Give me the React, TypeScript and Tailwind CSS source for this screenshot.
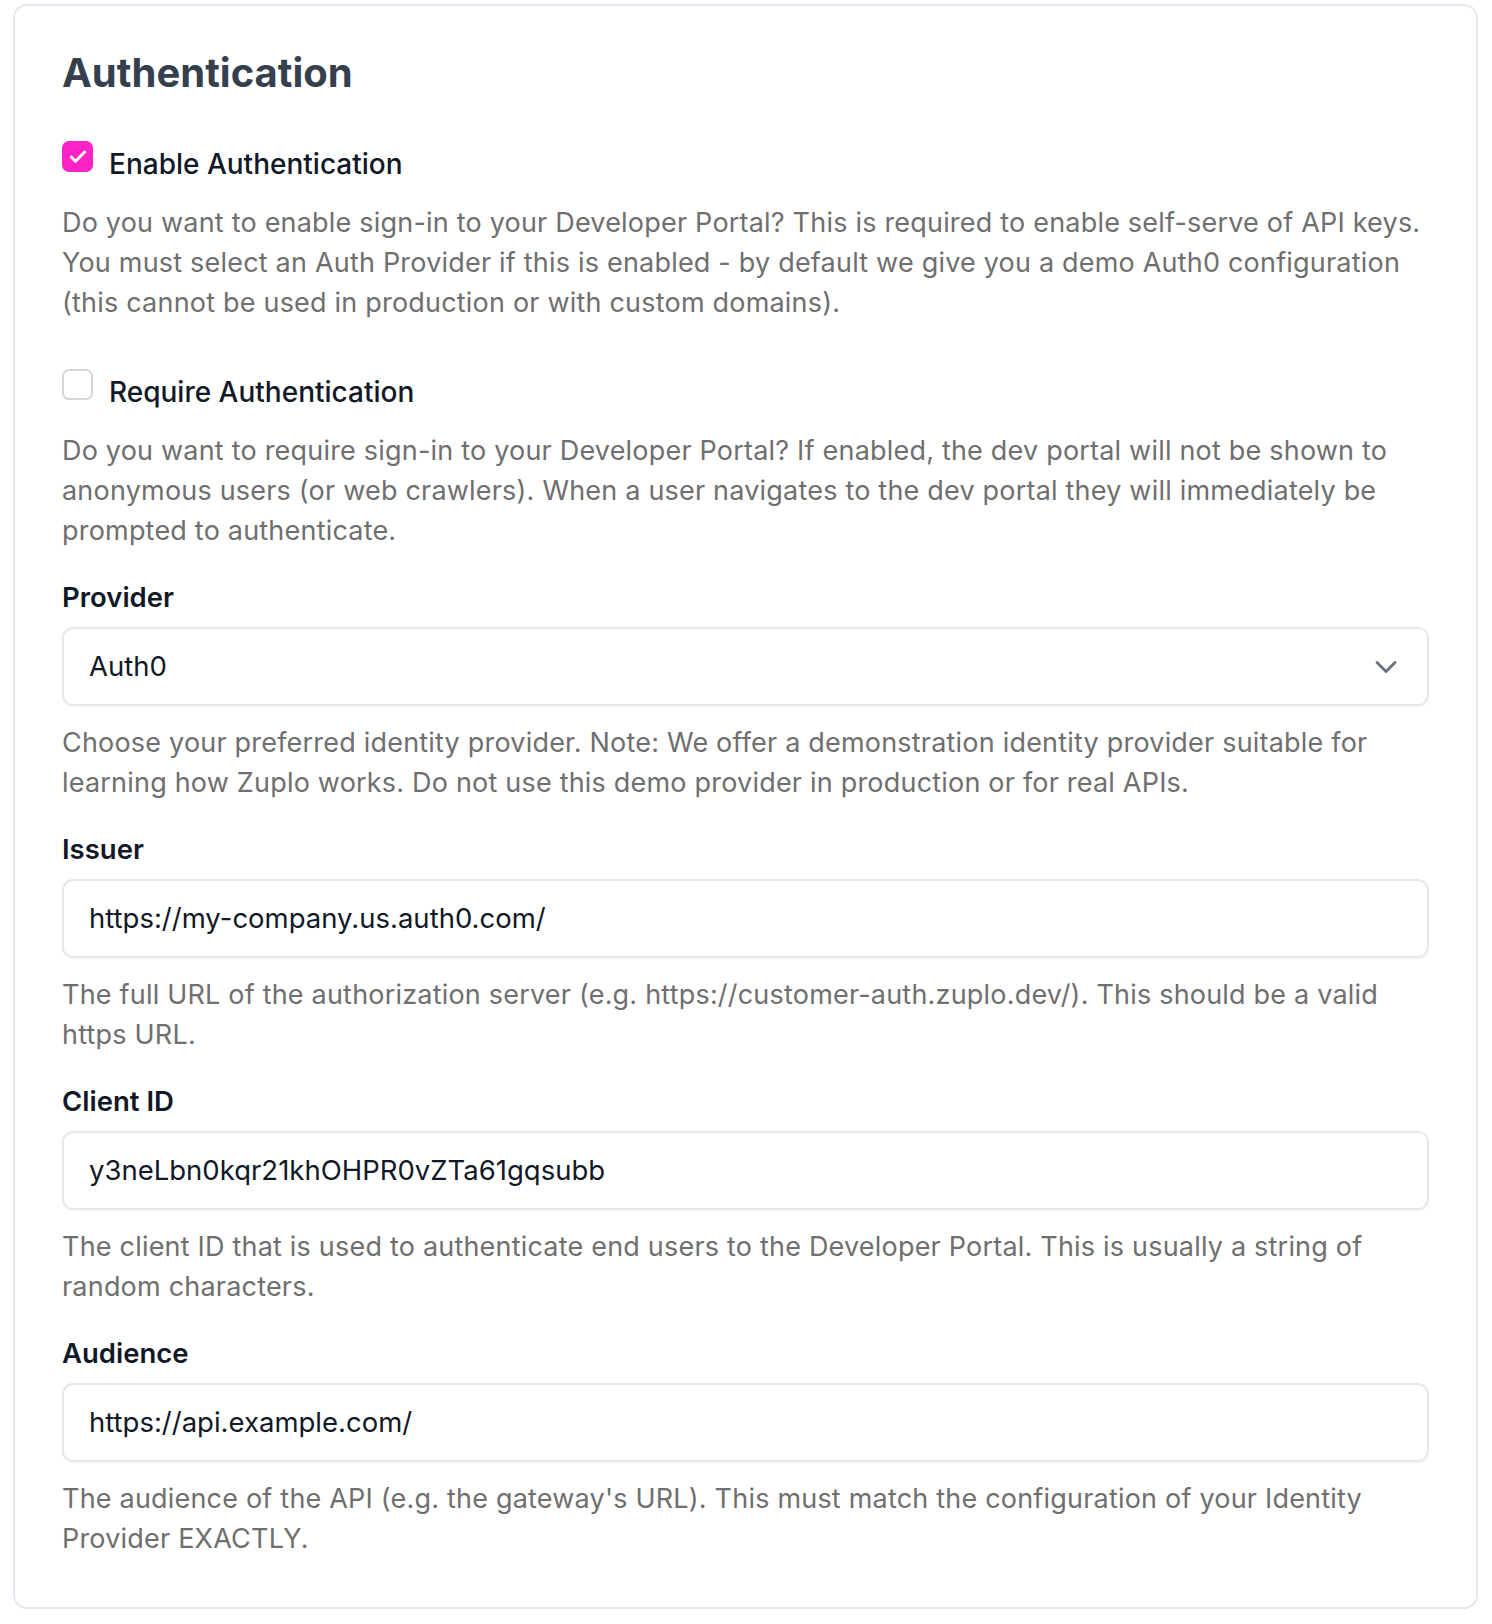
import { ChevronDown, Check } from "lucide-react";

const font = { fontFamily: "Inter, 'Noto Sans', sans-serif" };

type FieldProps = {
  label: string;
  value: string;
  help: string;
  select?: boolean;
};

const Field = ({ label, value, help, select }: FieldProps) => (
  <div className="mt-[26px]">
    <div className="text-[27.5px] leading-[40px] font-semibold text-[#111827]">{label}</div>
    <div className="mt-[10px] h-[79px] flex items-center justify-between rounded-[11px] border-2 border-[#e6e8ee] bg-white pl-[25px] pr-[23px] shadow-[0_1px_2px_rgba(0,0,0,0.04)]">
      <span className="text-[27.5px] text-[#111827]">{value}</span>
      {select && <ChevronDown className="w-[36px] h-[36px] text-[#6b7280]" strokeWidth={1.9} />}
    </div>
    <p className="mt-[17px] text-[27px] leading-[40px] tracking-[0.2px] text-[#6f6f6f]">{help}</p>
  </div>
);

const CheckRow = ({ checked, label }: { checked: boolean; label: string }) => (
  <div className="flex items-start gap-[16px]">
    <span
      className={
        checked
          ? "mt-[-3px] w-[31px] h-[31px] rounded-[7px] bg-[#ff22c4] flex items-center justify-center"
          : "mt-[-3px] w-[31px] h-[31px] rounded-[7px] border-2 border-[#d4d7de] bg-white"
      }
    >
      {checked && <Check className="w-[20px] h-[20px] text-white" strokeWidth={3.5} />}
    </span>
    <span className="text-[28px] leading-[40px] font-medium text-[#111827]">{label}</span>
  </div>
);

export default function App() {
  return (
    <div className="bg-white min-h-screen pl-[13px] pr-[14px] pt-[4px] pb-[16px]" style={font}>
      <div className="rounded-[14px] border-2 border-[#e4e8f1] bg-white px-[47px] pt-[41px] pb-[48px]">
        <h2 className="text-[40px] leading-[52px] font-bold text-[#363f4e]">Authentication</h2>

        <div className="mt-[45px]">
          <CheckRow checked label="Enable Authentication" />
          <p className="mt-[19px] text-[27px] leading-[40px] tracking-[0.2px] text-[#6f6f6f]">
            Do you want to enable sign-in to your Developer Portal? This is required to enable self-serve of API keys.
            You must select an Auth Provider if this is enabled - by default we give you a demo Auth0 configuration
            (this cannot be used in production or with custom domains).
          </p>
        </div>

        <div className="mt-[49px]">
          <CheckRow checked={false} label="Require Authentication" />
          <p className="mt-[19px] text-[27px] leading-[40px] tracking-[0.2px] text-[#6f6f6f]">
            Do you want to require sign-in to your Developer Portal? If enabled, the dev portal will not be shown to
            anonymous users (or web crawlers). When a user navigates to the dev portal they will immediately be
            prompted to authenticate.
          </p>
        </div>

        <Field
          label="Provider"
          value="Auth0"
          select
          help="Choose your preferred identity provider. Note: We offer a demonstration identity provider suitable for learning how Zuplo works. Do not use this demo provider in production or for real APIs."
        />
        <Field
          label="Issuer"
          value="https://my-company.us.auth0.com/"
          help="The full URL of the authorization server (e.g. https://customer-auth.zuplo.dev/). This should be a valid https URL."
        />
        <Field
          label="Client ID"
          value="y3neLbn0kqr21khOHPR0vZTa61gqsubb"
          help="The client ID that is used to authenticate end users to the Developer Portal. This is usually a string of random characters."
        />
        <Field
          label="Audience"
          value="https://api.example.com/"
          help="The audience of the API (e.g. the gateway's URL). This must match the configuration of your Identity Provider EXACTLY."
        />
      </div>
    </div>
  );
}
